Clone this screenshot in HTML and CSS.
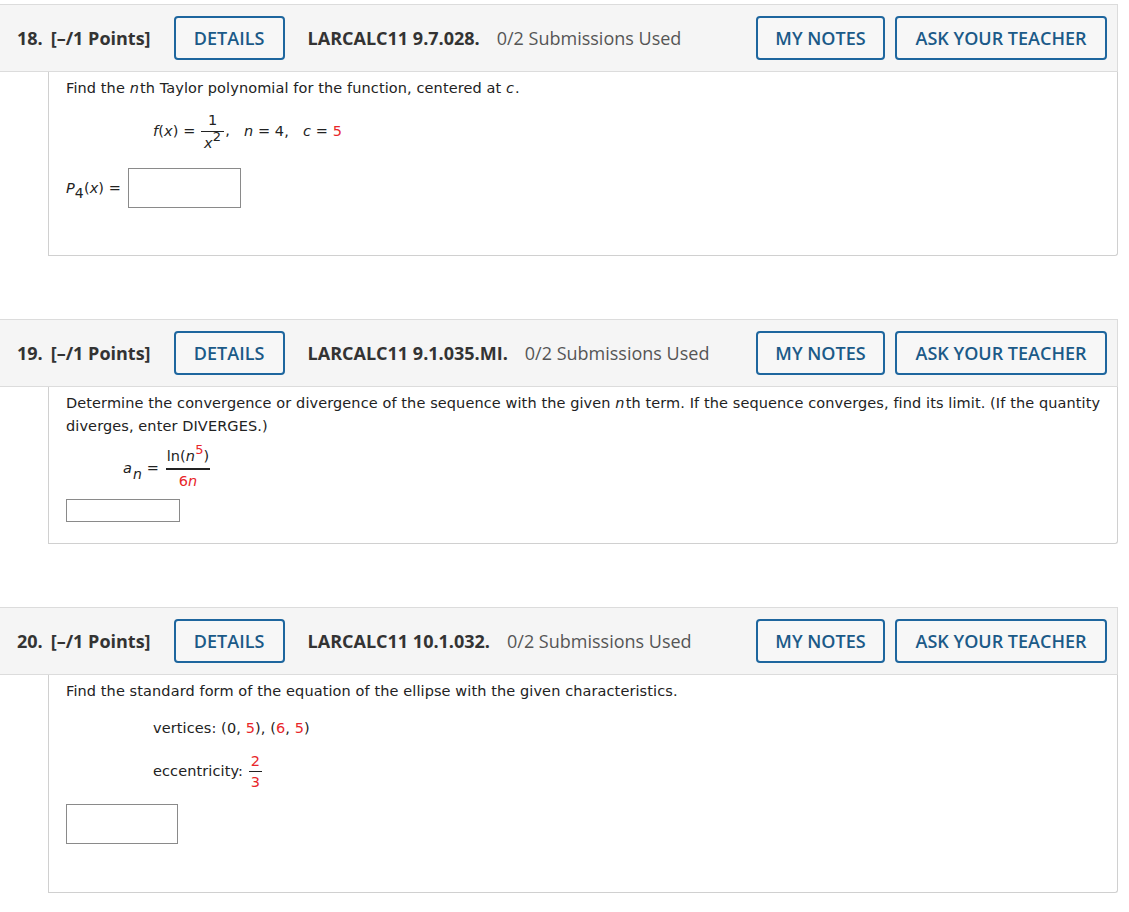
FILE: index.html
```html
<!DOCTYPE html>
<html lang="en">
<head>
<meta charset="utf-8">
<title>Assignment</title>
<link rel="stylesheet" href="styles.css">
</head>
<body>
<div class="page">

  <section class="question">
    <header class="q-head">
      <span class="q-num">18.</span>
      <span class="q-pts">[–/1 Points]</span>
      <button class="btn btn-details">DETAILS</button>
      <span class="q-code">LARCALC11 9.7.028.</span>
      <span class="q-subs">0/2 Submissions Used</span>
      <span class="spacer"></span>
      <button class="btn btn-notes">MY NOTES</button>
      <button class="btn btn-ask">ASK YOUR TEACHER</button>
    </header>
    <div class="q-body body-18">
      <p class="prompt">Find the <i>n</i>th Taylor polynomial for the function, centered at <i>c</i>.</p>
      <div class="formula f-taylor">
        <span class="expr"><i>f</i>(<i>x</i>) = <span class="frac"><span class="num">1</span><span class="den"><i>x</i><sup>2</sup></span></span><span class="comma">,</span><span class="gap"></span><i>n</i> = 4,<span class="gap"></span><i>c</i> = <span class="red">5</span></span>
      </div>
      <div class="answer-row">
        <span class="lbl"><i>P</i><sub>4</sub>(<i>x</i>) =</span>
        <span class="input input-tall"></span>
      </div>
    </div>
  </section>

  <section class="question">
    <header class="q-head">
      <span class="q-num">19.</span>
      <span class="q-pts">[–/1 Points]</span>
      <button class="btn btn-details">DETAILS</button>
      <span class="q-code">LARCALC11 9.1.035.MI.</span>
      <span class="q-subs">0/2 Submissions Used</span>
      <span class="spacer"></span>
      <button class="btn btn-notes">MY NOTES</button>
      <button class="btn btn-ask">ASK YOUR TEACHER</button>
    </header>
    <div class="q-body body-19">
      <p class="prompt">Determine the convergence or divergence of the sequence with the given <i>n</i>th term. If the sequence converges, find its limit. (If the quantity diverges, enter DIVERGES.)</p>
      <div class="formula f-seq">
        <span class="expr"><span class="an"><i>a</i><sub><i>n</i></sub></span> = <span class="frac frac-wide"><span class="num">ln(<i>n</i><sup class="red">5</sup>)</span><span class="den red">6<i>n</i></span></span></span>
      </div>
      <span class="input input-short"></span>
    </div>
  </section>

  <section class="question">
    <header class="q-head">
      <span class="q-num">20.</span>
      <span class="q-pts">[–/1 Points]</span>
      <button class="btn btn-details">DETAILS</button>
      <span class="q-code">LARCALC11 10.1.032.</span>
      <span class="q-subs">0/2 Submissions Used</span>
      <span class="spacer"></span>
      <button class="btn btn-notes">MY NOTES</button>
      <button class="btn btn-ask">ASK YOUR TEACHER</button>
    </header>
    <div class="q-body body-20">
      <p class="prompt">Find the standard form of the equation of the ellipse with the given characteristics.</p>
      <div class="formula f-vert"><span class="expr">vertices: (0, <span class="red">5</span>), (<span class="red">6</span>, <span class="red">5</span>)</span></div>
      <div class="formula f-ecc"><span class="expr">eccentricity: <span class="frac frac-small red"><span class="num">2</span><span class="den">3</span></span></span></div>
      <span class="input input-tall input-ell"></span>
    </div>
  </section>

</div>
</body>
</html>
```

FILE: styles.css
```css
html, body {
  margin: 0;
  padding: 0;
  background: #fff;
}

.page {
  padding-top: 4px;
  width: 1118px;
}

.question {
  margin-bottom: 63px;
}

/* question header bar */
.q-head {
  display: flex;
  align-items: center;
  height: 68px;
  box-sizing: border-box;
  padding: 0 10px 0 17px;
  background: #f5f5f5;
  border-top: 1px solid #dcdcdc;
  border-bottom: 1px solid #dcdcdc;
  border-right: 1px solid #dcdcdc;
  font-family: "Open Sans", "Liberation Sans", sans-serif;
  font-size: 18px;
  color: #333;
}

.q-num {
  font-weight: 700;
  margin-right: 8px;
}

.q-pts {
  font-weight: 700;
  margin-right: 23px;
}

.q-code {
  font-weight: 700;
  margin-left: 23px;
  margin-right: 17px;
}

.q-subs {
  color: #555;
}

.spacer {
  flex: 1;
}

.btn {
  height: 44px;
  box-sizing: border-box;
  padding: 0;
  border: 2px solid #1e669e;
  border-radius: 4px;
  background: #f7f7f7;
  color: #1b5a88;
  font-family: "Open Sans", "Liberation Sans", sans-serif;
  font-size: 18px;
  font-weight: 600;
  margin-left: 10px;
  white-space: nowrap;
}

.btn-details {
  margin-left: 0;
  width: 111px;
}

.btn-notes {
  width: 129px;
}

.btn-ask {
  width: 212px;
}

/* question body */
.q-body {
  margin-left: 48px;
  border: 1px solid #d0d0d0;
  border-top: none;
  border-bottom-right-radius: 3px;
  padding: 5px 8px 0 17px;
  font-family: "DejaVu Sans", Verdana, sans-serif;
  font-size: 14.5px;
  letter-spacing: 0.1px;
  color: #222;
  box-sizing: border-box;
}

.body-18 { height: 184px; }
.body-19 { height: 157px; }
.body-20 { height: 218px; }

.prompt {
  margin: 0;
  line-height: 23px;
}

.prompt i {
  padding-right: 1px;
}

.red {
  color: #e8262a;
}

.formula {
  display: flex;
  align-items: center;
  margin-left: 87px;
}

.expr {
  white-space: nowrap;
}

.frac {
  display: inline-block;
  vertical-align: middle;
  text-align: center;
  margin: 0 1px;
}

.frac .num {
  display: block;
  padding: 0 3px 2px;
  border-bottom: 1px solid #222;
  line-height: 17px;
}

.frac .den {
  display: block;
  padding: 2px 3px 0;
  line-height: 18px;
}

.frac sup {
  font-size: 13px;
  vertical-align: 7px;
  line-height: 0;
}

.comma {
  display: inline-block;
  vertical-align: 1px;
}

.gap {
  display: inline-block;
  width: 14px;
}

.f-taylor {
  margin-top: 12px;
  height: 40px;
}

.answer-row {
  display: flex;
  align-items: center;
  margin-top: 16px;
}

.lbl {
  margin-right: 7px;
}

.lbl sub {
  font-size: 14px;
  vertical-align: -5px;
  line-height: 0;
}

.input {
  display: block;
  border: 1px solid #8a8a8a;
  background: #fff;
  box-sizing: border-box;
}

.input-tall {
  width: 113px;
  height: 40px;
}

.input-short {
  width: 114px;
  height: 23px;
  margin-top: 9px;
}

.f-seq {
  margin-left: 57px;
  margin-top: 10px;
  height: 42px;
}

.an sub {
  font-size: 14px;
  vertical-align: -6px;
  line-height: 0;
  margin-left: 1px;
}

.frac-wide {
  margin-left: 2px;
}

.frac-wide .num {
  padding: 0 1px 3px;
  border-bottom-width: 2px;
  color: #222;
}

.f-vert {
  margin-top: 14px;
  line-height: 23px;
}

.f-ecc {
  margin-top: 10px;
  height: 44px;
}

.frac-small .num {
  border-bottom-color: #222;
  padding: 0 2px 1px;
}

.frac-small .den {
  padding: 1px 2px 0;
}

.input-ell {
  width: 112px;
  margin-top: 10px;
}
```
